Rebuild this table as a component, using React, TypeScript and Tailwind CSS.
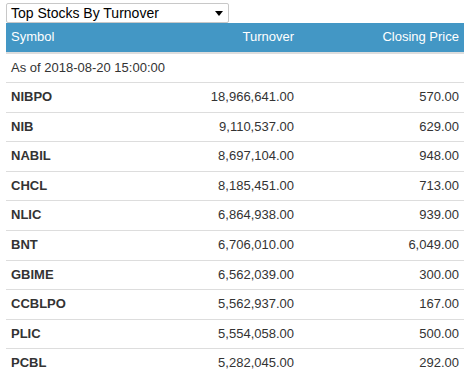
const rows = [
  ['NIBPO', '18,966,641.00', '570.00'],
  ['NIB', '9,110,537.00', '629.00'],
  ['NABIL', '8,697,104.00', '948.00'],
  ['CHCL', '8,185,451.00', '713.00'],
  ['NLIC', '6,864,938.00', '939.00'],
  ['BNT', '6,706,010.00', '6,049.00'],
  ['GBIME', '6,562,039.00', '300.00'],
  ['CCBLPO', '5,562,937.00', '167.00'],
  ['PLIC', '5,554,058.00', '500.00'],
  ['PCBL', '5,282,045.00', '292.00'],
];

export default function App() {
  return (
    <div className="min-h-screen bg-white pl-[6px] pt-[3px] text-[13px] leading-[18.57px] text-[#333] font-['Liberation_Sans',Arial,sans-serif]">
      {/* Dropdown */}
      <div className="flex h-[20px] w-[223px] items-center justify-between rounded-[2px] border border-[#c8c8c8] bg-white pl-[4px] pr-[5px] text-[14px] text-black">
        <span>Top Stocks By Turnover</span>
        <svg width="8" height="5" viewBox="0 0 8 5">
          <path d="M0 0h8L4 5z" fill="#000" />
        </svg>
      </div>

      <div className="w-[458px]">
        {/* Header */}
        <div className="grid grid-cols-[150px_143px_165px] border-b-2 border-[#ddd] bg-[#4397c5] text-white">
          <div className="p-[5px]">Symbol</div>
          <div className="p-[5px] text-right">Turnover</div>
          <div className="p-[5px] text-right">Closing Price</div>
        </div>

        <div className="border-b border-[#ddd] p-[5px]">As of 2018-08-20 15:00:00</div>

        {rows.map(([sym, turnover, close]) => (
          <div key={sym} className="grid grid-cols-[150px_143px_165px] border-b border-[#ddd]">
            <div className="p-[5px] font-bold">{sym}</div>
            <div className="p-[5px] text-right">{turnover}</div>
            <div className="p-[5px] text-right">{close}</div>
          </div>
        ))}
      </div>
    </div>
  );
}
